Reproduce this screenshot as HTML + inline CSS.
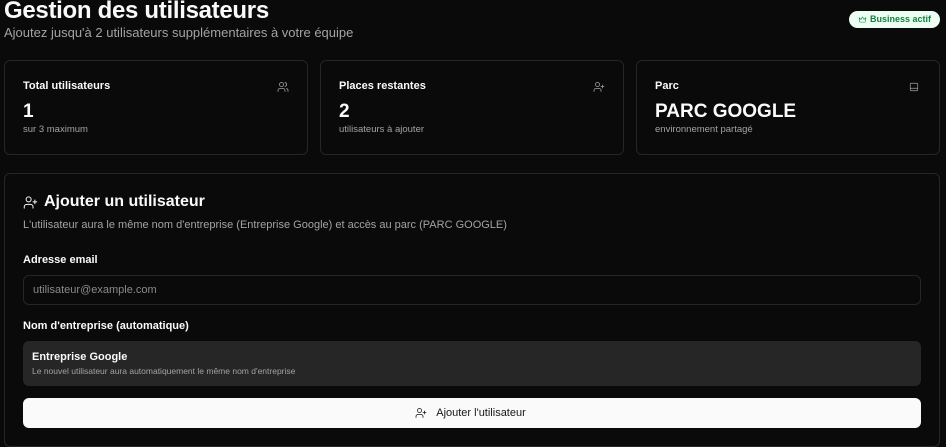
<!DOCTYPE html>
<html><head><meta charset="utf-8"><style>
*{box-sizing:border-box;margin:0;padding:0}
body{width:946px;height:447px;background:#0a0a0a;color:#fafafa;font-family:"Liberation Sans",sans-serif;position:relative;overflow:hidden}
.a{position:absolute}
.card{position:absolute;border:1px solid #262626;border-radius:6px;background:#0a0a0a}
.lbl{font-size:11px;font-weight:bold;color:#fafafa}
.big{font-size:19px;font-weight:bold}
.sub{font-size:9.5px;color:#a3a3a3}
svg{stroke:#a3a3a3;fill:none;stroke-width:1.6;stroke-linecap:round;stroke-linejoin:round}
</style></head><body>
<div class="a" style="left:4px;top:-3px;font-size:24px;font-weight:bold;letter-spacing:-0.3px">Gestion des utilisateurs</div>
<div class="a" style="left:4px;top:25px;font-size:13px;color:#a3a3a3">Ajoutez jusqu'à 2 utilisateurs supplémentaires à votre équipe</div>
<div class="a" style="left:849px;top:11px;width:91px;height:17px;border-radius:9px;background:#ecfdf3;color:#15803d;font-size:9px;font-weight:bold;line-height:17px;padding-left:21px;white-space:nowrap">Business actif</div>
<svg class="a" style="left:858px;top:15px;stroke:#15803d" width="9" height="9" viewBox="0 0 24 24"><path d="M3 7l5 5 4-7 4 7 5-5-2 12H5z"/></svg>

<div class="card" style="left:4px;top:60px;width:304px;height:95px"></div>
<div class="a lbl" style="left:23px;top:80px">Total utilisateurs</div>
<svg class="a" style="left:277px;top:81px" width="12" height="12" viewBox="0 0 24 24"><circle cx="9" cy="7" r="4"/><path d="M2 21v-2a4 4 0 014-4h6a4 4 0 014 4v2M16 3.1a4 4 0 010 7.8M22 21v-2a4 4 0 00-3-3.9"/></svg>
<div class="a big" style="left:23px;top:101px">1</div>
<div class="a sub" style="left:23px;top:124px">sur 3 maximum</div>

<div class="card" style="left:320px;top:60px;width:304px;height:95px"></div>
<div class="a lbl" style="left:339px;top:80px">Places restantes</div>
<svg class="a" style="left:593px;top:81px" width="12" height="12" viewBox="0 0 24 24"><circle cx="9" cy="7" r="4"/><path d="M2 21v-2a4 4 0 014-4h6a4 4 0 014 4v2M19 8v6M22 11h-6"/></svg>
<div class="a big" style="left:339px;top:101px">2</div>
<div class="a sub" style="left:339px;top:124px">utilisateurs à ajouter</div>

<div class="card" style="left:636px;top:60px;width:304px;height:95px"></div>
<div class="a lbl" style="left:655px;top:80px">Parc</div>
<svg class="a" style="left:909px;top:82px" width="10" height="10" viewBox="0 0 24 24"><rect x="3" y="3" width="18" height="18" rx="2"/><path d="M3 15h18"/></svg>
<div class="a big" style="left:655px;top:101px">PARC GOOGLE</div>
<div class="a sub" style="left:655px;top:124px">environnement partagé</div>

<div class="card" style="left:4px;top:173px;width:936px;height:274px"></div>
<svg class="a" style="left:23px;top:195px;stroke:#fafafa" width="15" height="15" viewBox="0 0 24 24"><circle cx="9" cy="7" r="4"/><path d="M2 21v-2a4 4 0 014-4h6a4 4 0 014 4v2M19 8v6M22 11h-6"/></svg>
<div class="a" style="left:44px;top:193px;font-size:16px;font-weight:bold">Ajouter un utilisateur</div>
<div class="a" style="left:23px;top:219px;font-size:11px;color:#a3a3a3">L'utilisateur aura le même nom d'entreprise (Entreprise Google) et accès au parc (PARC GOOGLE)</div>
<div class="a lbl" style="left:23px;top:254px">Adresse email</div>
<div class="a" style="left:23px;top:275px;width:898px;height:30px;border:1px solid #262626;border-radius:6px;font-size:11px;color:#8a8a8a;line-height:28px;padding-left:9px">utilisateur@example.com</div>
<div class="a lbl" style="left:23px;top:320px">Nom d'entreprise (automatique)</div>
<div class="a" style="left:23px;top:341px;width:898px;height:45px;background:#262626;border-radius:6px"></div>
<div class="a" style="left:32px;top:351px;font-size:11px;font-weight:bold">Entreprise Google</div>
<div class="a" style="left:32px;top:366px;font-size:8.5px;color:#a3a3a3">Le nouvel utilisateur aura automatiquement le même nom d'entreprise</div>
<div class="a" style="left:23px;top:398px;width:898px;height:30px;background:#fafafa;border-radius:6px;color:#171717;font-size:11px;text-align:center;line-height:30px;padding-left:18px">Ajouter l'utilisateur</div>
<svg class="a" style="left:415px;top:407px;stroke:#171717" width="12" height="12" viewBox="0 0 24 24"><circle cx="9" cy="7" r="4"/><path d="M2 21v-2a4 4 0 014-4h6a4 4 0 014 4v2M19 8v6M22 11h-6"/></svg>
</body></html>
